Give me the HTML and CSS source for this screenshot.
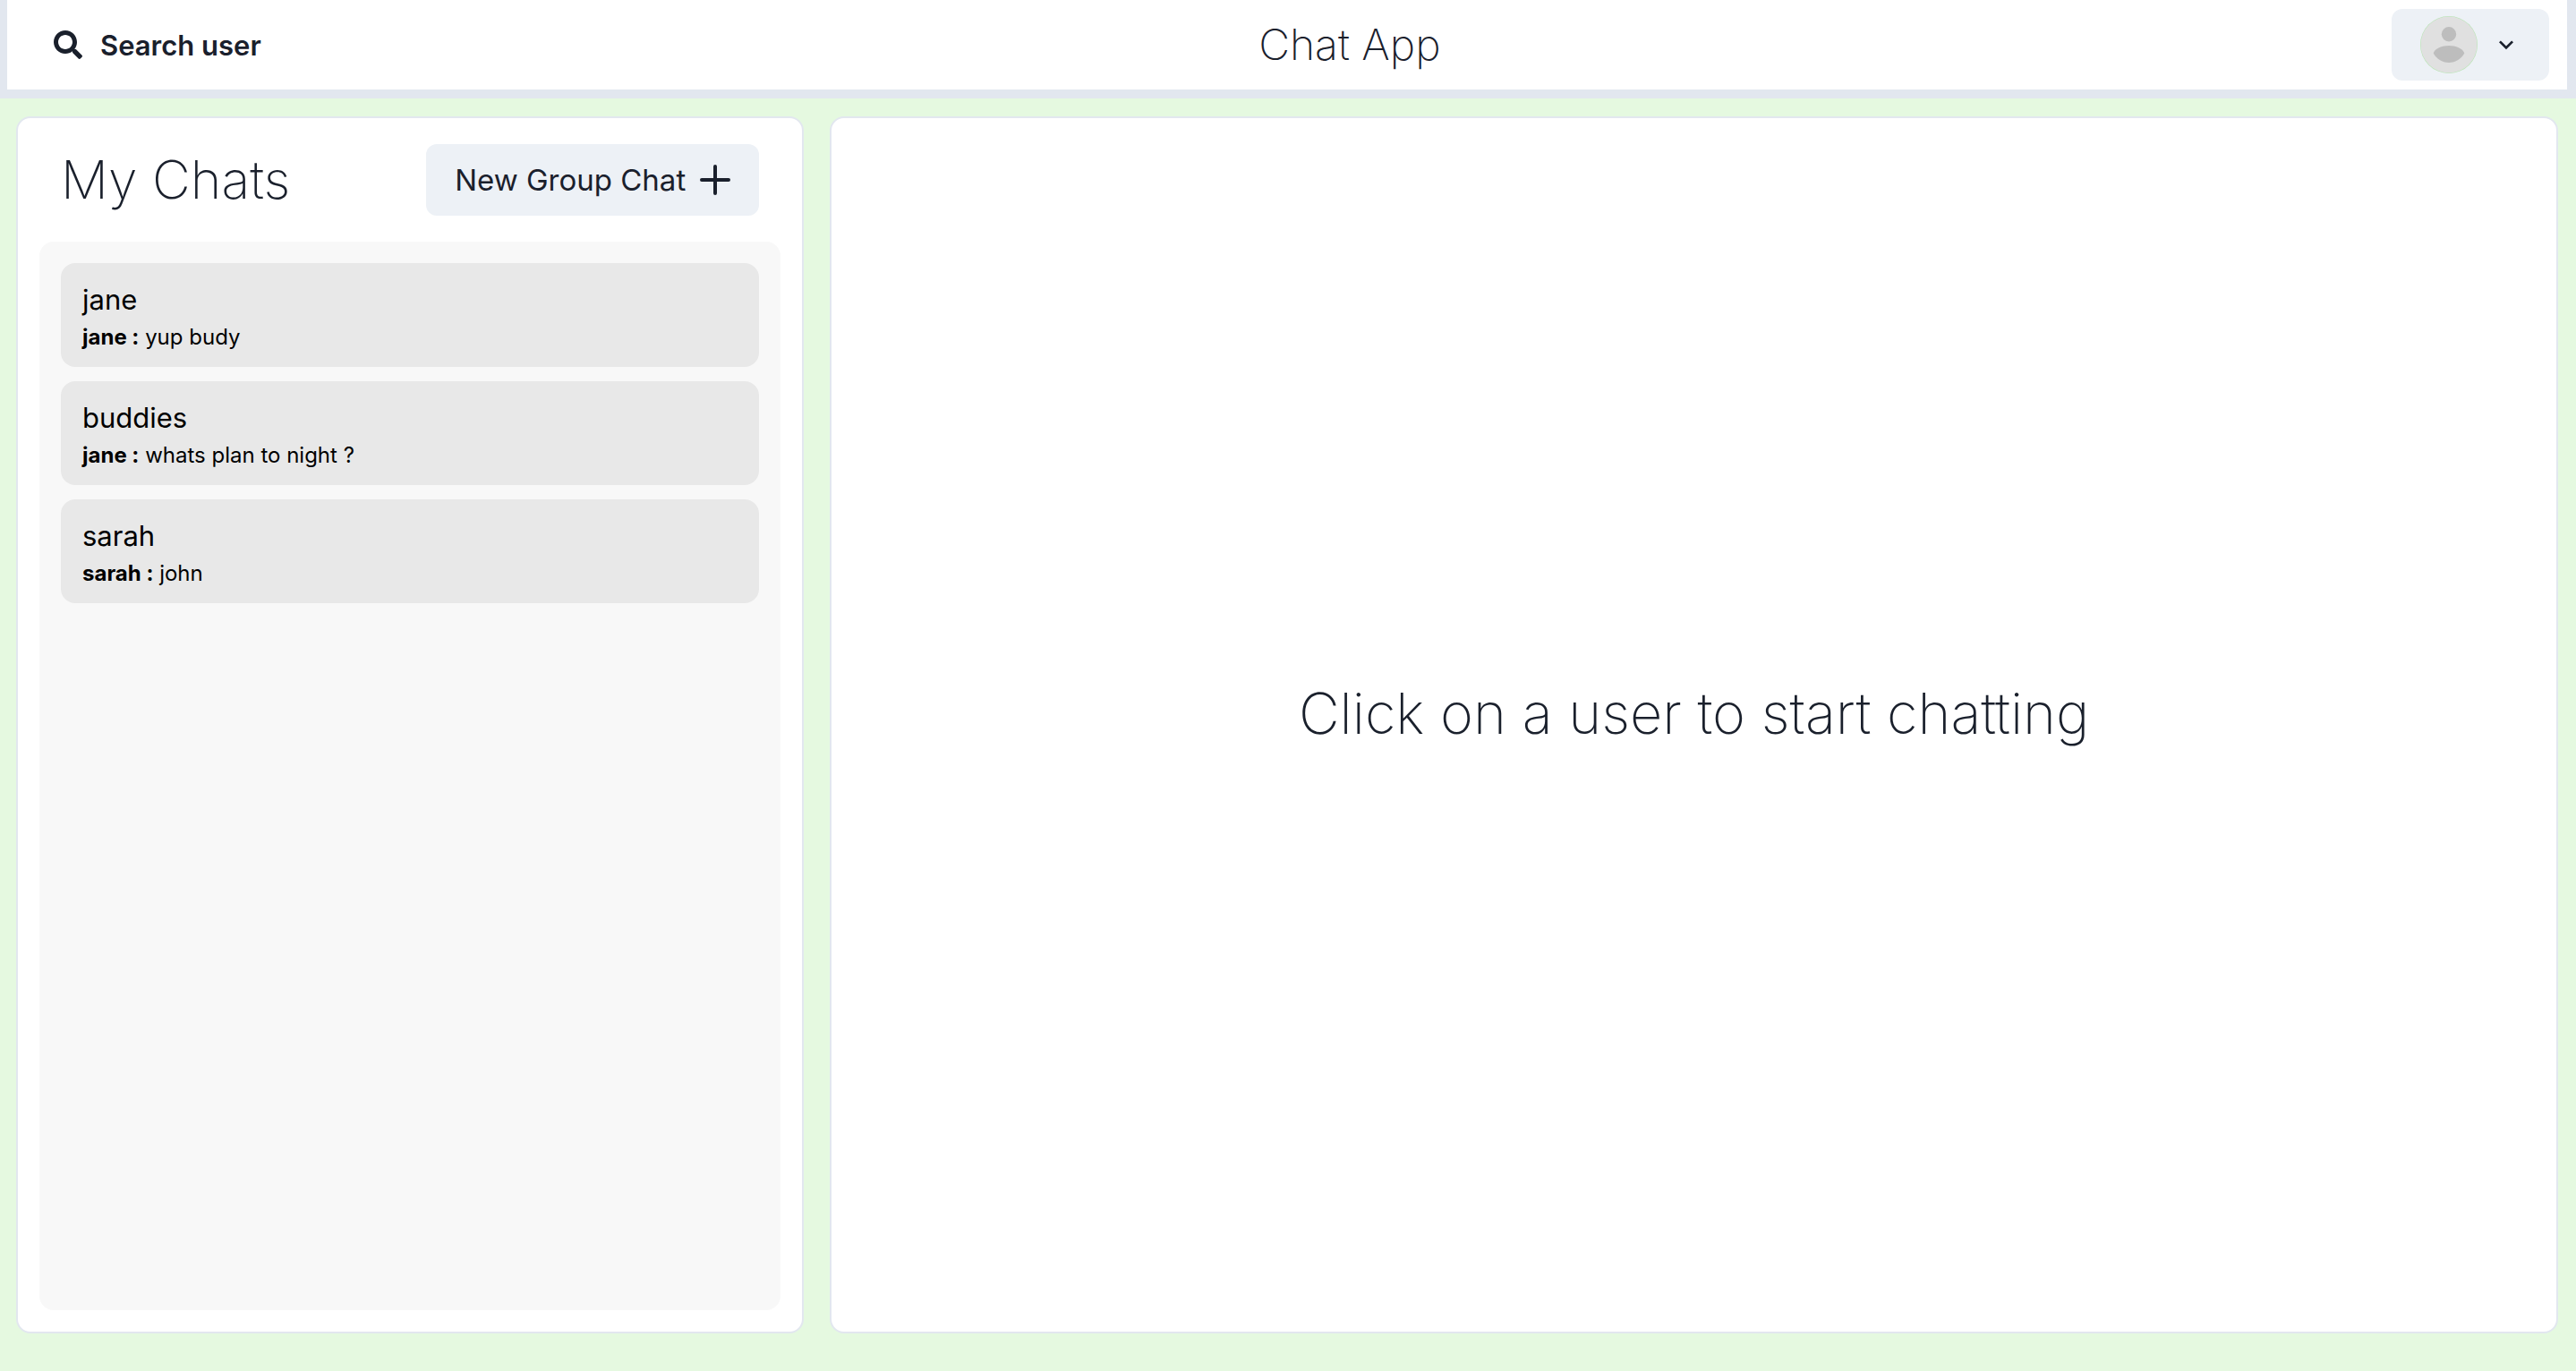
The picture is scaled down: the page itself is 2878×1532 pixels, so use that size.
FILE: index.html
```html
<!DOCTYPE html>
<html lang="en">
<head>
<meta charset="utf-8">
<title>Chat App</title>
<meta name="viewport" content="width=device-width, initial-scale=1">
<link rel="stylesheet" href="styles.css">
</head>
<body>
<header class="topbar">
  <button class="search" type="button">
    <svg class="search-icon" viewBox="0 0 512 512" aria-hidden="true"><path fill="currentColor" d="M505 442.700L405.300 343c-4.500-4.500-10.600-7-17-7H372c27.600-35.300 44-79.700 44-128C416 93.100 322.900 0 208 0S0 93.100 0 208s93.100 208 208 208c48.300 0 92.700-16.400 128-44v16.300c0 6.400 2.500 12.500 7 17l99.700 99.700c9.400 9.400 24.600 9.400 33.900 0l28.300-28.300c9.400-9.400 9.400-24.600.1-34zM208 336c-70.700 0-128-57.200-128-128 0-70.700 57.200-128 128-128 70.700 0 128 57.200 128 128 0 70.700-57.200 128-128 128z"/></svg>
    <span>Search user</span>
  </button>
  <h1 class="brand">Chat App</h1>
  <button class="profile" type="button" aria-label="Account menu">
    <svg class="avatar" viewBox="0 0 64 64" aria-hidden="true"><circle cx="32" cy="32" r="32" fill="#b9e6b4"/><circle cx="32" cy="32" r="31.500" fill="#e0e0e0"/><circle cx="32" cy="20.300" r="8.200" fill="#bdbdbd"/><path fill="#bdbdbd" d="M14.700 41.500C16.500 36 24 33 32 33s15.500 3 17.300 8.500C46 47.500 39.500 52 32 52s-14-4.500-17.300-10.500z"/></svg>
    <svg class="chevron" viewBox="0 0 24 24" aria-hidden="true"><path fill="currentColor" d="M16.590 8.590L12 13.170 7.410 8.590 6 10l6 6 6-6z"/></svg>
  </button>
</header>
<main class="workspace">
  <section class="card chats">
    <div class="chats-head">
      <h2 class="title">My Chats</h2>
      <button class="new-group" type="button">
        <span>New Group Chat</span>
        <svg class="plus" viewBox="0 0 34 34" aria-hidden="true"><path d="M17 2v30M2 17h30" stroke="currentColor" stroke-width="4" stroke-linecap="round"/></svg>
      </button>
    </div>
    <div class="chat-list">
      <button class="chat" type="button"><span class="chat-name">jane</span><span class="chat-last"><b>jane :</b> yup budy</span></button>
      <button class="chat" type="button"><span class="chat-name">buddies</span><span class="chat-last"><b>jane :</b> whats plan to night ?</span></button>
      <button class="chat" type="button"><span class="chat-name">sarah</span><span class="chat-last"><b>sarah :</b> john</span></button>
    </div>
  </section>
  <section class="card conversation">
    <p class="prompt">Click on a user to start chatting</p>
  </section>
</main>
</body>
</html>
```
FILE: styles.css
```css
* {
  box-sizing: border-box;
}

body {
  margin: 0;
  min-height: 100vh;
  display: flex;
  flex-direction: column;
  background: #e5f9e0;
  color: #1a202c;
  font-family: Inter, "Liberation Sans", sans-serif;
}

h1,
h2,
p {
  margin: 0;
}

button {
  border: 0;
  color: inherit;
  font-family: inherit;
  cursor: pointer;
}

.topbar {
  display: flex;
  align-items: center;
  justify-content: space-between;
  padding: 10px 20px;
  background: #fff;
  border: solid #e2e7ef;
  border-width: 0 10px 10px 8px;
}

.search {
  display: flex;
  align-items: center;
  gap: 20px;
  height: 80px;
  padding: 0 52px 0 32px;
  background: none;
  font-size: 31px;
  font-weight: 600;
}

.search-icon {
  width: 32px;
  height: 32px;
}

.brand {
  font-size: 48px;
  line-height: 72px;
  font-weight: 200;
}

.profile {
  display: flex;
  align-items: center;
  gap: 16px;
  height: 80px;
  padding: 0 32px;
  border-radius: 12px;
  background: #edf1f6;
}

.avatar {
  width: 64px;
  height: 64px;
}

.chevron {
  width: 32px;
  height: 32px;
}

.workspace {
  flex: 1;
  display: grid;
  grid-template-columns: 31fr 68fr;
  gap: 29px;
  padding: 20px 20px 42px 18px;
}

.card {
  display: flex;
  background: #fff;
  border: 2px solid #e2e7ef;
  border-radius: 16px;
}

.chats {
  flex-direction: column;
  padding: 24px;
}

.chats-head {
  display: flex;
  align-items: center;
  justify-content: space-between;
  padding: 0 24px 24px;
}

.title {
  font-size: 59px;
  line-height: 90px;
  font-weight: 200;
}

.new-group {
  display: flex;
  align-items: center;
  gap: 16px;
  height: 80px;
  padding: 0 32px;
  border-radius: 12px;
  background: #edf1f6;
  font-size: 33px;
  font-weight: 400;
}

.plus {
  width: 34px;
  height: 34px;
}

.chat-list {
  flex: 1;
  display: flex;
  flex-direction: column;
  gap: 16px;
  padding: 24px;
  border-radius: 16px;
  background: #f8f8f8;
}

.chat {
  display: flex;
  flex-direction: column;
  padding: 17px 24px 15px;
  border-radius: 16px;
  background: #e8e8e8;
  color: #000;
  text-align: left;
}

.chat-name {
  font-size: 31px;
  line-height: 48px;
}

.chat-last {
  font-size: 24px;
  line-height: 36px;
}

.conversation {
  align-items: center;
  justify-content: center;
  padding-bottom: 26px;
}

.prompt {
  font-size: 63px;
  line-height: 90px;
  font-weight: 200;
}
```
